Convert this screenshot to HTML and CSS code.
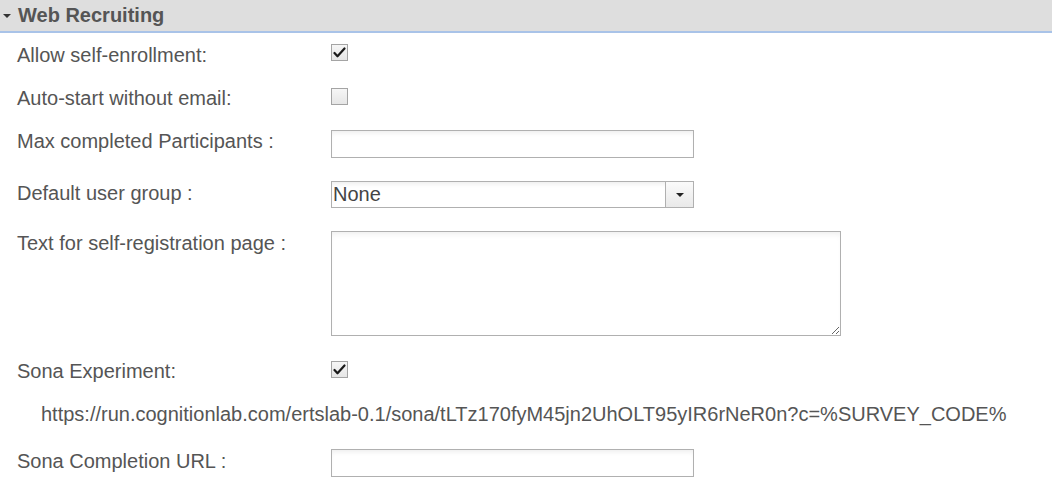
FILE: index.html
```html
<!DOCTYPE html>
<html lang="en">
<head>
  <meta charset="UTF-8" />
  <meta name="viewport" content="width=device-width, initial-scale=1.0" />
  <title>Web Recruiting</title>
  <link rel="stylesheet" href="styles.css">
</head>
<body>
<div class="section-head">
  <span class="caret"></span>
  <span class="section-title">Web Recruiting</span>
</div>

<form class="settings">
  <div class="row">
    <label class="label">Allow self-enrollment:</label>
    <span class="check is-checked">
      <svg width="13" height="11" viewBox="0 0 13 11"><path d="M1.5 6 L4.5 9.3 L11.5 1.5" fill="none" stroke="#1a1a1a" stroke-width="2.2" stroke-linecap="round" stroke-linejoin="round"/></svg>
    </span>
  </div>

  <div class="row">
    <label class="label">Auto-start without email:</label>
    <span class="check check-low"></span>
  </div>

  <div class="row row-wide">
    <label class="label" for="maxParticipants">Max completed Participants :</label>
    <input class="field field-low" type="text" id="maxParticipants" />
  </div>

  <div class="row row-wide">
    <label class="label">Default user group :</label>
    <div class="select">
      <span class="select-value">None</span>
      <span class="select-btn"><span class="tri"></span></span>
    </div>
  </div>

  <div class="row row-wide">
    <label class="label" for="regText">Text for self-registration page :</label>
    <textarea class="area" id="regText"></textarea>
  </div>

  <div class="row">
    <label class="label">Sona Experiment:</label>
    <span class="check check-low is-checked">
      <svg width="13" height="11" viewBox="0 0 13 11"><path d="M1.5 6 L4.5 9.3 L11.5 1.5" fill="none" stroke="#1a1a1a" stroke-width="2.2" stroke-linecap="round" stroke-linejoin="round"/></svg>
    </span>
  </div>

  <div class="row row-wide">
    <span class="url">https://run.cognitionlab.com/ertslab-0.1/sona/tLTz170fyM45jn2UhOLT95yIR6rNeR0n?c=%SURVEY_CODE%</span>
  </div>

  <div class="row">
    <label class="label" for="sonaUrl">Sona Completion URL :</label>
    <input class="field" type="text" id="sonaUrl" />
  </div>
</form>
</body>
</html>
```

FILE: styles.css
```css
body {
  margin: 0;
  font-family: "Liberation Sans", Arial, sans-serif;
  font-size: 20px;
  color: #555;
  background: #fff;
}

.section-head {
  height: 31px;
  background: #dedede;
  border-bottom: 2px solid #a9c3e8;
  display: flex;
  align-items: center;
}

.caret {
  width: 0;
  height: 0;
  margin: 1px 7px 0 3px;
  border-left: 4px solid transparent;
  border-right: 4px solid transparent;
  border-top: 4px solid #333;
}

.section-title {
  font-weight: bold;
  font-size: 20px;
  color: #555;
}

.settings {
  padding: 10px 0 0 17px;
  display: flex;
  flex-direction: column;
}

.row {
  display: flex;
  align-items: flex-start;
  margin-bottom: 19px;
}
.row-wide {
  margin-bottom: 23px;
}

.label {
  width: 314px;
  flex-shrink: 0;
  line-height: 24px;
}

.check {
  box-sizing: border-box;
  width: 17px;
  height: 17px;
  margin-top: 1px;
  border: 1px solid #a4a4a4;
  background: linear-gradient(#f6f6f6, #e6e6e6);
  display: flex;
  align-items: center;
  justify-content: center;
}
.check-low {
  margin-top: 2px;
}

.field {
  box-sizing: border-box;
  width: 363px;
  height: 28px;
  margin: 0;
  border: 1px solid #b0b0b0;
  box-shadow: inset 0 4px 5px -2px rgba(0, 0, 0, 0.07);
  font: inherit;
}
.field-low {
  margin-top: 1px;
}

.select {
  box-sizing: border-box;
  width: 363px;
  height: 27px;
  border: 1px solid #b0b0b0;
  box-shadow: inset 0 4px 5px -2px rgba(0, 0, 0, 0.07);
  display: flex;
  align-items: stretch;
}
.select-value {
  flex: 1;
  line-height: 25px;
  padding-left: 1px;
  color: #444;
}
.select-btn {
  width: 27px;
  border-left: 1px solid #b0b0b0;
  background: linear-gradient(#fafafa, #e9e9e9);
  display: flex;
  align-items: center;
  justify-content: center;
}
.tri {
  width: 0;
  height: 0;
  border-left: 4px solid transparent;
  border-right: 4px solid transparent;
  border-top: 4px solid #222;
}

.area {
  box-sizing: border-box;
  width: 510px;
  height: 105px;
  margin: 0;
  border: 1px solid #b0b0b0;
  box-shadow: inset 0 5px 6px -3px rgba(0, 0, 0, 0.07);
  font: inherit;
}

.url {
  padding-left: 24px;
  line-height: 24px;
}
```
